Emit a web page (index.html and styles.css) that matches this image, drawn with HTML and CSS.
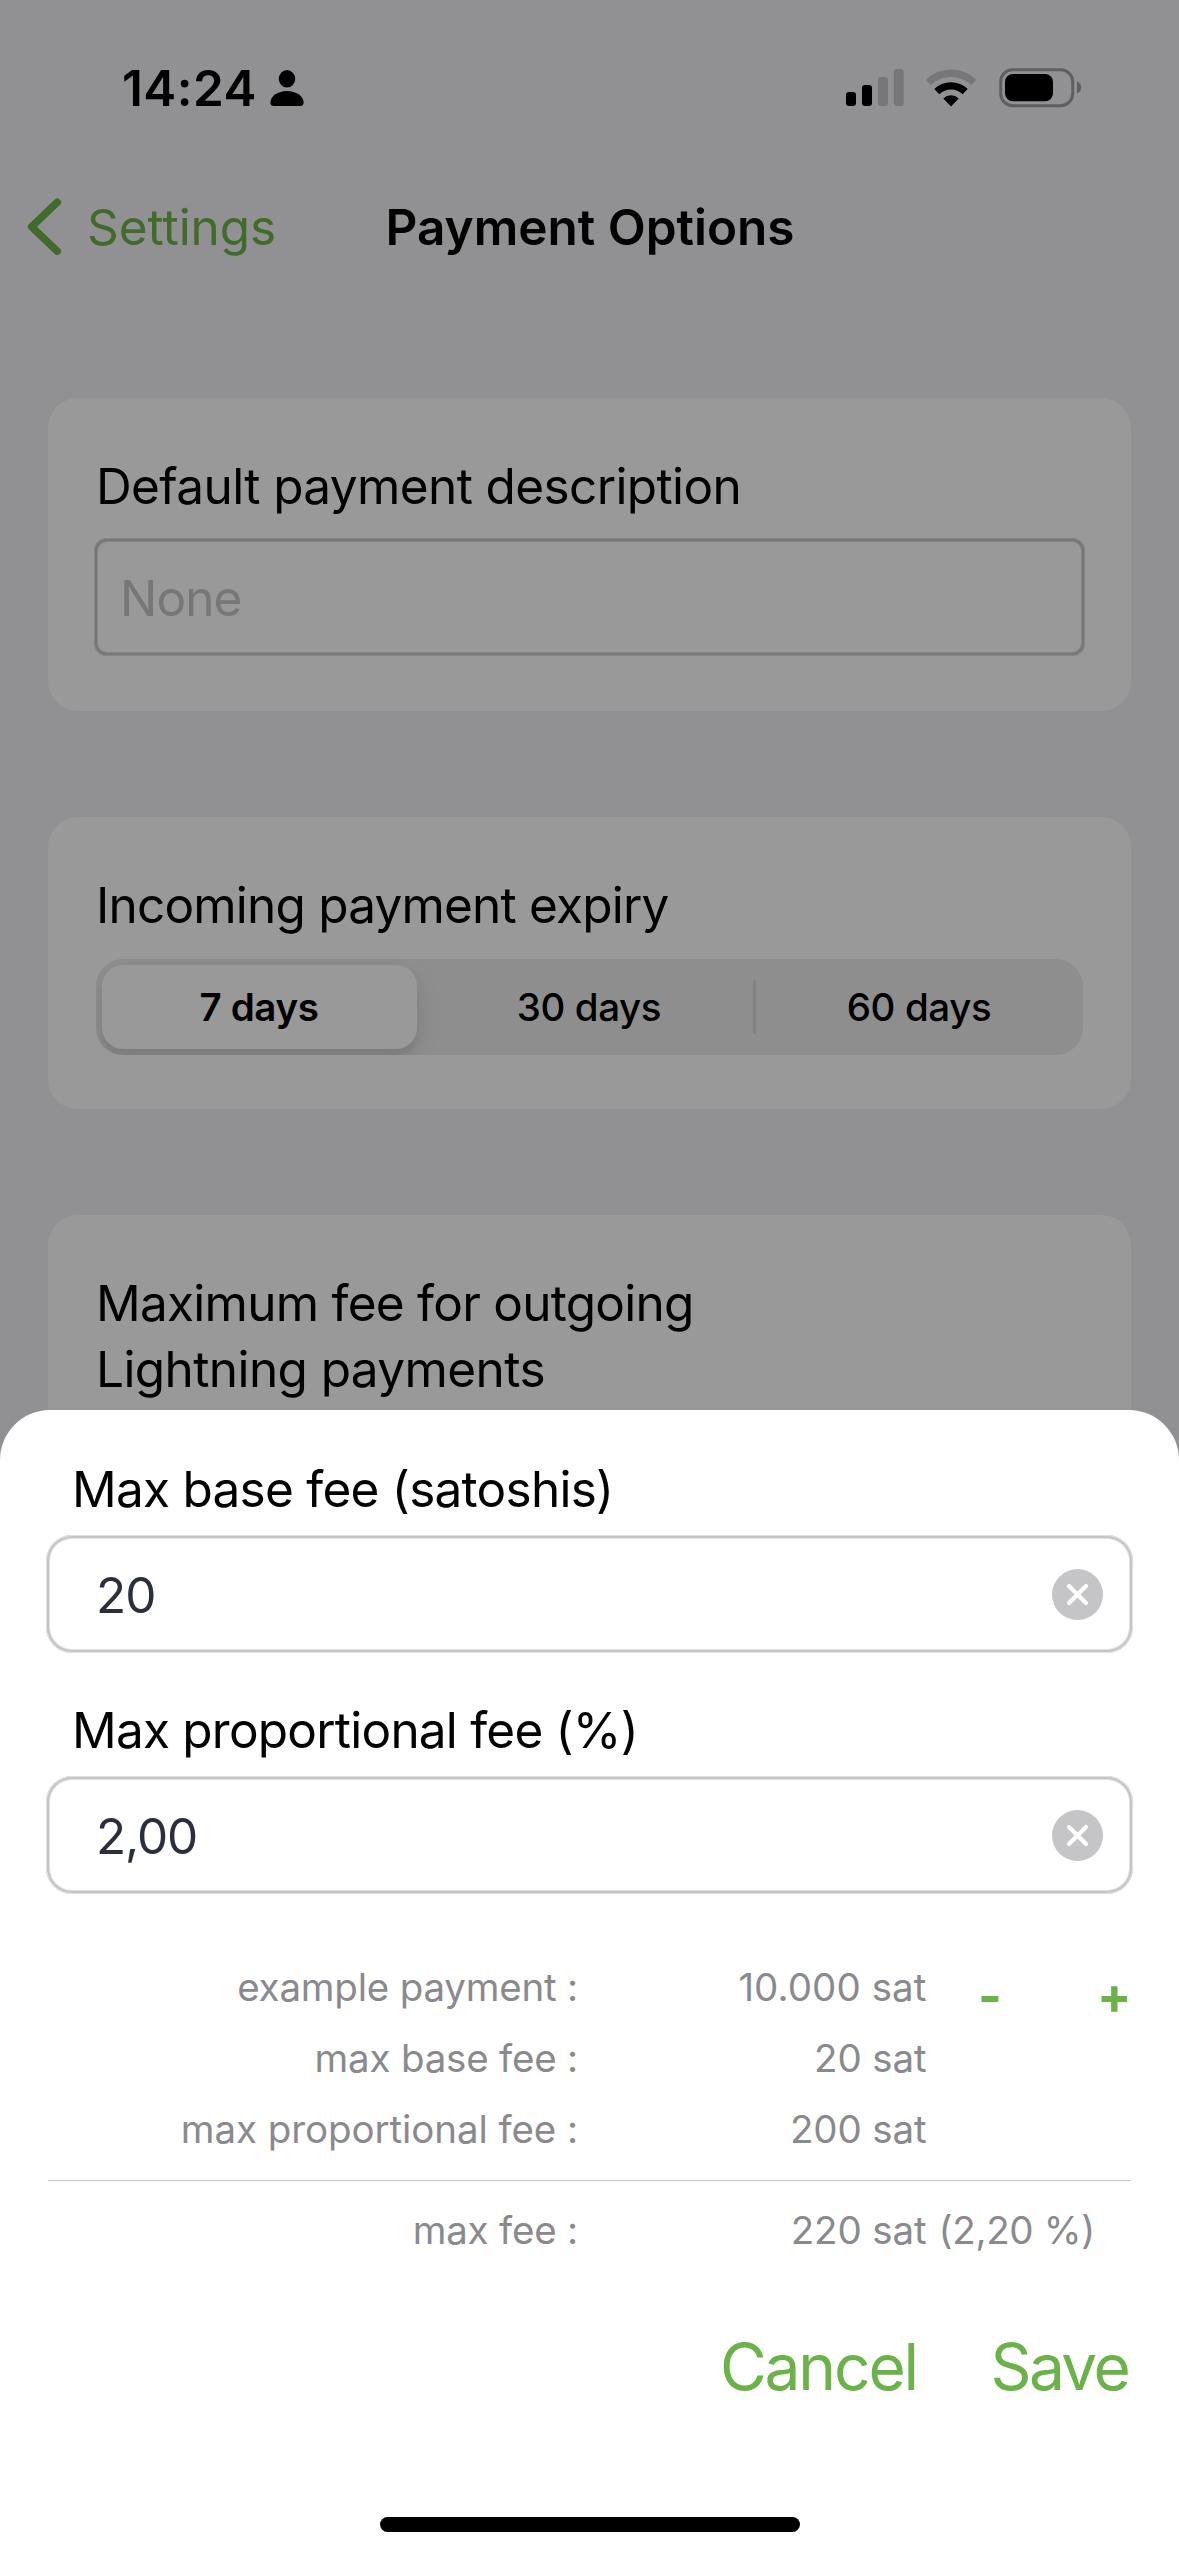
FILE: index.html
```
<!DOCTYPE html>
<html lang="en">
<head>
<meta charset="utf-8">
<title>Payment Options</title>
<link rel="stylesheet" href="styles.css">
</head>
<body>
<main class="screen">
  <header class="status-bar">
    <span class="clock">14:24</span>
    <svg class="person" width="34" height="36" viewBox="0 0 34 36" fill="#000">
      <ellipse cx="17" cy="8.8" rx="8.2" ry="8.7"/>
      <path d="M17 21C26 21 33.6 26 33.6 32.5Q33.6 36 30 36H4Q.4 36 .4 32.5C.4 26 8 21 17 21Z"/>
    </svg>
    <svg class="signal" width="58" height="37" viewBox="0 0 58 37">
      <rect x="0" y="23" width="10" height="14" rx="3" fill="#000"/>
      <rect x="16" y="16" width="10" height="21" rx="3" fill="#000"/>
      <rect x="32" y="8" width="10" height="29" rx="3" fill="#c7c6cc"/>
      <rect x="47.8" y="0" width="10" height="37" rx="3" fill="#c7c6cc"/>
    </svg>
    <svg class="wifi" width="52" height="38" viewBox="-26 -37.5 52 38" fill="none">
      <path d="M-22.8-24.1A33.2 33.2 0 0 1 22.8-24.1" stroke="#c7c6cc" stroke-width="7.5"/>
      <path d="M-14.2-14.9A20.6 20.6 0 0 1 14.2-14.9" stroke="#000" stroke-width="7.2"/>
      <path d="M0 0L-7.7-8.1A11.2 11.2 0 0 1 7.7-8.1Z" fill="#000"/>
    </svg>
    <svg class="battery" width="84" height="40" viewBox="0 0 84 40">
      <rect x="1.7" y="1.7" width="72" height="36" rx="12" fill="none" stroke="#9e9ea2" stroke-width="3"/>
      <rect x="6" y="6" width="48" height="27.3" rx="8" fill="#000"/>
      <path d="M78 13.3Q82.2 15.5 82.2 19.5T78 25.8Z" fill="#9e9ea2"/>
    </svg>
  </header>

  <nav class="nav-bar">
    <svg class="back-icon" width="36" height="60" viewBox="0 0 36 60" fill="none" stroke="#6bb348" stroke-width="7.4" stroke-linecap="round" stroke-linejoin="round">
      <path d="M30.3 5.2L4.6 29.7L30.3 54.2"/>
    </svg>
    <a class="back-label">Settings</a>
    <h1 class="title">Payment Options</h1>
  </nav>

  <div class="cards">
    <section class="card description-card">
      <h2 class="card-title tight">Default payment description</h2>
      <div class="text-input"><span class="placeholder">None</span></div>
    </section>
    <section class="card expiry-card">
      <h2 class="card-title tighter">Incoming payment expiry</h2>
      <div class="segmented">
        <span class="segment selected">7 days</span>
        <span class="segment">30 days</span>
        <span class="segment divided">60 days</span>
      </div>
    </section>
    <section class="card fee-card">
      <h2 class="card-title two-line"><span class="line-wide">Maximum fee for outgoing</span><br><span class="line-short">Lightning payments</span></h2>
    </section>
  </div>
</main>

<div class="dimmer"></div>

<section class="sheet">
  <label class="field-label">Max base fee (satoshis)</label>
  <div class="field">
    <span class="field-value">20</span>
    <svg class="clear" width="51" height="51" viewBox="0 0 51 51">
      <circle cx="25.5" cy="25.5" r="25.5" fill="#c5c5c7"/>
      <path d="M17 17L34 34M34 17L17 34" stroke="#fff" stroke-width="4.2" stroke-linecap="round"/>
    </svg>
  </div>
  <label class="field-label second">Max proportional fee (%)</label>
  <div class="field">
    <span class="field-value decimal">2,00</span>
    <svg class="clear" width="51" height="51" viewBox="0 0 51 51">
      <circle cx="25.5" cy="25.5" r="25.5" fill="#c5c5c7"/>
      <path d="M17 17L34 34M34 17L17 34" stroke="#fff" stroke-width="4.2" stroke-linecap="round"/>
    </svg>
  </div>

  <div class="breakdown">
    <div class="row"><span class="name">example payment :</span><span class="amount thousands">10.000 sat</span><span class="stepper"><b class="minus">-</b><b class="plus">+</b></span></div>
    <div class="row"><span class="name">max base fee :</span><span class="amount">20 sat</span></div>
    <div class="row"><span class="name proportional">max proportional fee :</span><span class="amount">200 sat</span></div>
  </div>
  <div class="row total"><span class="name">max fee :</span><span class="amount">220 sat</span><span class="percent">(2,20 %)</span></div>

  <div class="actions">
    <a class="cancel">Cancel</a>
    <a class="save">Save</a>
  </div>
  <div class="home-indicator"></div>
</section>
</body>
</html>
```
FILE: styles.css
```
* {
  box-sizing: border-box;
}

body {
  margin: 0;
  position: relative;
  width: 1179px;
  height: 2556px;
  overflow: hidden;
  font-family: "Inter", "Liberation Sans", sans-serif;
  font-size: 49.5px;
  line-height: 60px;
  color: #000;
  white-space: nowrap;
}

h1,
h2 {
  margin: 0;
  font: inherit;
}

svg {
  display: block;
  flex: none;
}

.screen {
  height: 2556px;
  background: #f2f2f7;
}

/* Status bar */
.status-bar {
  display: flex;
  align-items: flex-start;
  height: 197px;
  padding: 58px 0 0 122px;
}

.clock {
  width: 148px;
  font-weight: 600;
  letter-spacing: 0.44px;
}

.person {
  margin-top: 12px;
}

.signal {
  margin: 11px 0 0 542px;
}

.wifi {
  margin: 10.5px 0 0 21.4px;
}

.battery {
  margin: 9.5px 0 0 21.4px;
}

/* Navigation */
.nav-bar {
  display: flex;
  height: 201px;
  padding-left: 27px;
}

.back-label {
  width: 298.5px;
  margin-left: 24px;
  color: #6bb348;
  letter-spacing: -0.04px;
}

.title {
  font-weight: 600;
  letter-spacing: -0.02px;
}

/* Settings cards */
.cards {
  display: flex;
  flex-direction: column;
  gap: 106px;
  padding: 0 48px;
}

.card {
  padding: 58px 48px 0;
  background: #fff;
  border-radius: 30px;
}

.description-card {
  height: 313px;
}

.expiry-card {
  height: 292px;
}

.fee-card {
  height: 400px;
  padding-top: 55px;
}

.tight {
  letter-spacing: -0.61px;
}

.tighter {
  letter-spacing: -0.8px;
}

.two-line {
  line-height: 66px;
}

.line-wide {
  letter-spacing: -0.74px;
}

.line-short {
  letter-spacing: -0.59px;
}

.text-input {
  height: 118px;
  margin: 22px -2px 0;
  padding: 30px 0 0 26px;
  border-radius: 13px;
  box-shadow: inset 0 0 0 1px #dfdfe0, inset 0 0 0 3px #c6c6c8, inset 0 0 0 4px #dfdfe0;
}

.placeholder {
  color: #c6c6c9;
  letter-spacing: -0.9px;
}

.segmented {
  display: grid;
  grid-template-columns: repeat(3, 1fr);
  height: 96px;
  margin-top: 24px;
  border-radius: 27px;
  background: #ededee;
  overflow: hidden;
}

.segment {
  display: flex;
  align-items: center;
  justify-content: center;
  padding-right: 1px;
  font-size: 38.5px;
  font-weight: 500;
  letter-spacing: -0.4px;
}

.selected {
  margin: 6px 8px 6px 6px;
  border-radius: 21px;
  background: #fff;
  font-weight: 600;
  letter-spacing: -0.35px;
  box-shadow: 0 9px 24px rgba(0, 0, 0, 0.12), 0 9px 3px rgba(0, 0, 0, 0.04);
}

.divided::before {
  content: "";
  width: 3px;
  height: 54px;
  margin: 0 auto 0 -1px;
  border-radius: 2px;
  background: #d7d7d8;
}

.divided::after {
  content: "";
  margin-left: auto;
}

.dimmer {
  position: absolute;
  inset: 0;
  background: rgba(0, 0, 0, 0.4);
}

/* Bottom sheet */
.sheet {
  position: absolute;
  left: 0;
  right: 0;
  bottom: 0;
  height: 1146px;
  padding: 49px 46px 0;
  border-radius: 50px 50px 0 0;
  background: #fff;
}

.field-label {
  display: block;
  padding-left: 26px;
  letter-spacing: -0.74px;
}

.second {
  margin-top: 47px;
  letter-spacing: -0.78px;
}

.field {
  display: flex;
  justify-content: space-between;
  height: 118px;
  margin-top: 16px;
  padding: 30px 30px 0 50px;
  border-radius: 26px;
  box-shadow: inset 0 0 0 1px #e2e2e3, inset 0 0 0 3px #c5c5c7, inset 0 0 0 4px #e2e2e3;
}

.field-value {
  color: #2b2e3d;
  letter-spacing: -1px;
}

.decimal {
  letter-spacing: -1.1px;
}

.clear {
  margin-top: 4px;
}

.breakdown {
  margin: 58px 2px 0;
  padding-bottom: 15px;
  border-bottom: 1px solid #c5c5c7;
}

.row {
  display: grid;
  grid-template-columns: 530px 348.5px 1fr;
  height: 71px;
  line-height: 71px;
  font-size: 38.5px;
  color: #8a8a8e;
}

.name {
  text-align: right;
  letter-spacing: -0.2px;
}

.proportional {
  letter-spacing: -0.08px;
}

.amount {
  text-align: right;
  letter-spacing: -0.12px;
}

.thousands {
  letter-spacing: 0.08px;
}

.stepper {
  display: flex;
  padding: 14px 0 0 51.5px;
  line-height: 60px;
  font-size: 51px;
  color: #6bb348;
}

.minus {
  width: 119px;
}

.total {
  height: 50px;
  margin: 24px 2px 0;
  line-height: 50px;
}

.percent {
  padding-left: 12px;
  letter-spacing: -0.32px;
}

.actions {
  display: flex;
  margin-top: 73px;
  padding-left: 674px;
  font-size: 64px;
  line-height: 78px;
  color: #6bb348;
}

.cancel {
  width: 270.5px;
  letter-spacing: -2.16px;
}

.save {
  letter-spacing: -2.6px;
}

.home-indicator {
  width: 420px;
  height: 15px;
  margin: 111px 0 0 334px;
  border-radius: 8px;
  background: #000;
}
```
